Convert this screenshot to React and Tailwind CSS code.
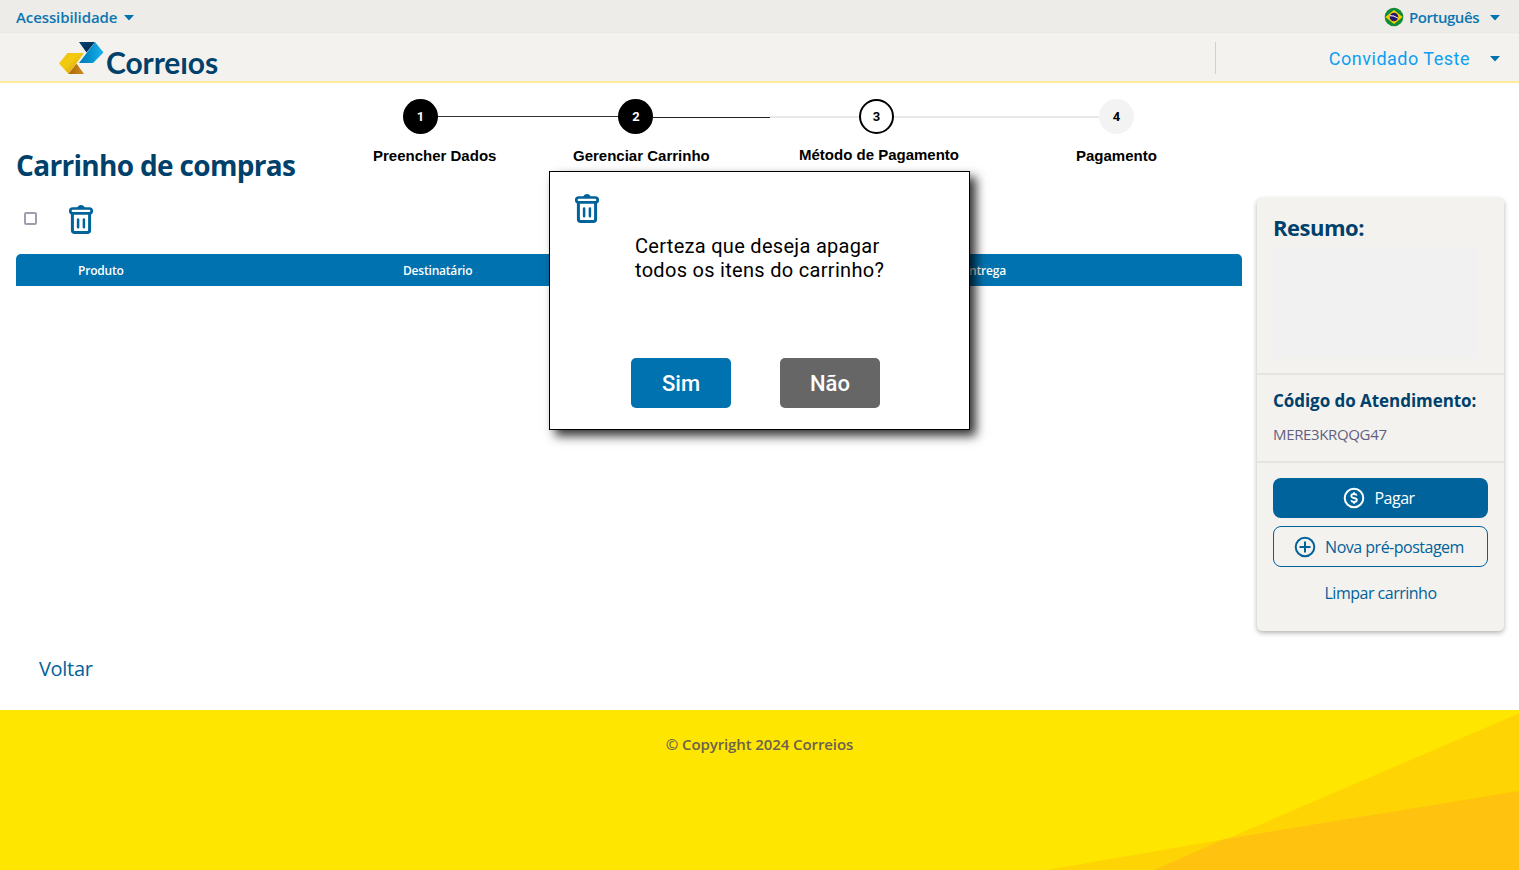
const brand = "font-['Trebuchet_MS','Open_Sans',sans-serif]";

function Caret() {
  return (
    <svg width="10" height="6" viewBox="0 0 10 6" className="mt-px shrink-0 fill-[#0072b0]">
      <path d="M0 0h10L5 5.5z" />
    </svg>
  );
}

function Trash() {
  return (
    <svg width="26" height="31" viewBox="0 0 26 31" fill="none" stroke="#00639b" className="shrink-0">
      <path d="M9.200 4C10 0 16 0 16.800 4z" fill="#00639b" stroke="none" />
      <rect x="2.300" y="4.500" width="21.400" height="4.800" rx="2.400" strokeWidth="2.700" />
      <path d="M4.400 9.500v16.800a2.300 2.300 0 0 0 2.300 2.300h12.600a2.300 2.300 0 0 0 2.300-2.300V9.500" strokeWidth="3" />
      <path d="M10.100 15.500v7.800M15.900 15.500v7.800" strokeWidth="2.500" strokeLinecap="round" />
    </svg>
  );
}

function Flag() {
  return (
    <svg width="20" height="20" viewBox="0 0 20 20">
      <circle cx="10" cy="10" r="9.300" fill="#118c36" />
      <path d="M10 3l8.600 7L10 17 1.400 10z" fill="#f8cf05" />
      <circle cx="10" cy="10" r="4.300" fill="#29166f" />
      <path d="M6 8.700q4-.5 8 2.500" fill="none" stroke="#fff" strokeWidth="1" />
    </svg>
  );
}

function Logo() {
  return (
    <div className="flex items-start" aria-label="Correios">
      <svg width="45" height="33" viewBox="0 0 45 33" className="shrink-0">
        <defs>
          <linearGradient id="navy" x1="0" y1="0" x2="1" y2="1">
            <stop offset="0" stopColor="#00467a" />
            <stop offset="1" stopColor="#00203f" />
          </linearGradient>
          <linearGradient id="blue" x1="0" y1="0" x2="1" y2="0">
            <stop offset="0" stopColor="#007cb8" />
            <stop offset=".3" stopColor="#0088c6" />
            <stop offset="1" stopColor="#1ab4ec" />
          </linearGradient>
          <linearGradient id="gold" x1="0" y1="0" x2="1" y2="1">
            <stop offset="0" stopColor="#e9be10" />
            <stop offset=".4" stopColor="#f3cc10" />
            <stop offset="1" stopColor="#d39a10" />
          </linearGradient>
          <linearGradient id="amber" x1="0" y1="0" x2="1" y2="0">
            <stop offset="0" stopColor="#a8650d" />
            <stop offset="1" stopColor="#cf8d18" />
          </linearGradient>
        </defs>
        <path d="M20 0h16l-8.500 10.500z" fill="url(#navy)" />
        <path d="M36 0l8.500 10.500L34 21H20z" fill="url(#blue)" />
        <path d="M8.500 11H25L9.500 32 0 21.500z" fill="url(#gold)" />
        <path d="M17.500 21.500L25 32H9.500z" fill="url(#amber)" />
      </svg>
      <span className="ml-[2px] mt-[5px] font-['Lato',sans-serif] text-[30px] font-bold leading-[30px] tracking-[-0.100px] text-[#00416b]">
        Corre&#305;os
      </span>
    </div>
  );
}

function Step({ n, kind }) {
  const look = {
    done: "bg-black text-white",
    current: "border-2 border-black bg-white text-black",
    next: "bg-[#f3f3f3] text-black",
  }[kind];
  return (
    <div className={"flex size-[35px] shrink-0 items-center justify-center rounded-full pl-px font-['Roboto',sans-serif] text-[13px] font-bold " + look}>
      {n}
    </div>
  );
}

function Stepper() {
  return (
    <div className="pt-4">
      <div className="flex items-center pl-[29.500px]">
        <Step n="1" kind="done" />
        <div className="h-px w-[180.500px] bg-[#333]" />
        <Step n="2" kind="done" />
        <div className="mt-px h-px w-[117px] bg-[#222]" />
        <div className="h-[2px] w-[88.500px] bg-[#e8e8e8]" />
        <Step n="3" kind="current" />
        <div className="h-[2px] w-[205px] bg-[#e8e8e8]" />
        <Step n="4" kind="next" />
      </div>
      <div className="mt-[13px] flex whitespace-nowrap font-['Liberation_Sans',Arial,sans-serif] text-[15px] font-bold leading-[18px] text-black">
        <div className="w-[200px]">Preencher Dados</div>
        <div className="w-[226px]">Gerenciar Carrinho</div>
        <div className="-mt-px w-[277px]">Método de Pagamento</div>
        <div>Pagamento</div>
      </div>
    </div>
  );
}

function Summary() {
  return (
    <aside className="h-[433px] w-[247px] shrink-0 rounded-[5px] bg-[#f4f2ee] shadow-[0_2px_5px_rgba(0,0,0,0.3)]">
      <section className="h-[177px] border-b-2 border-[#e5e4e0] px-4 pt-[14px]">
        <h2 className="text-[22px] font-bold leading-[30px] tracking-[-0.500px] text-[#00416b]">Resumo:</h2>
        <div className="mt-[5px] h-[111px] w-[204px] bg-[#f1f1f1]" />
      </section>
      <section className="h-[88px] border-b-2 border-[#e5e4e0] px-4 pt-[14px]">
        <h3 className="whitespace-nowrap text-[17px] font-bold leading-6 tracking-[-0.050px] text-[#00416b]">Código do Atendimento:</h3>
        <p className="mt-[9px] text-[15px] font-medium leading-6 tracking-[-0.350px] text-[#635f80]">MERE3KRQQG47</p>
      </section>
      <section className="flex flex-col px-4 pt-[15px] text-[16px] font-medium tracking-[-0.500px] text-[#00639b]">
        <button className="flex h-10 items-center justify-center gap-[9px] rounded-lg bg-[#00639b] pr-[3px] text-white">
          <svg width="22" height="22" viewBox="0 0 22 22" fill="none" stroke="currentColor" strokeWidth="2">
            <circle cx="11" cy="11" r="9.300" />
            <path d="M13.800 8.500c-.5-1.200-1.600-1.500-2.800-1.500-1.600 0-2.700.8-2.700 2s1.100 1.700 2.700 2 2.800.8 2.800 2-1.200 2-2.800 2c-1.400 0-2.500-.5-2.900-1.700M11 5.200V7M11 15v1.800" strokeWidth="1.800" />
          </svg>
          Pagar
        </button>
        <button className="mt-2 flex h-[41px] items-center justify-center gap-[9px] whitespace-nowrap rounded-lg border border-[#00639b] pr-[3px]">
          <svg width="22" height="22" viewBox="0 0 22 22" fill="none" stroke="currentColor" strokeWidth="2">
            <circle cx="11" cy="11" r="9.300" />
            <path d="M11 5.500v11M5.500 11h11" />
          </svg>
          Nova pré-postagem
        </button>
        <button className="mt-[14px] h-6">Limpar carrinho</button>
      </section>
    </aside>
  );
}

function Dialog() {
  return (
    <div role="dialog" className="absolute left-[549px] top-[171px] flex h-[259px] w-[421px] flex-col border border-black bg-white pl-[24px] pt-[21px] font-['Roboto',sans-serif] shadow-[6px_6px_10px_rgba(0,0,0,0.8)]">
      <Trash />
      <p className="ml-[61px] mt-[10px] whitespace-nowrap text-[20px] leading-6 tracking-[0.300px] text-black">
        Certeza que deseja apagar
        <br />
        todos os itens do carrinho?
      </p>
      <div className="ml-[57px] mt-[76px] flex gap-[49px] text-[22px] font-medium text-white">
        <button className="h-[50px] w-[100px] rounded-[5px] bg-[#0072b0]">Sim</button>
        <button className="h-[50px] w-[100px] rounded-[5px] bg-[#666]">Não</button>
      </div>
    </div>
  );
}

export default function App() {
  return (
    <div className={"relative flex h-[870px] w-[1519px] flex-col overflow-hidden bg-white " + brand}>
      <div className="flex h-[34px] shrink-0 items-center justify-between bg-[#eeece8] pl-4 pr-[19px] text-[15px] font-semibold text-[#0c76b2]">
        <div className="flex items-center gap-[7px]">
          <span className="tracking-[-0.100px]">Acessibilidade</span>
          <Caret />
        </div>
        <div className="flex items-center">
          <Flag />
          <span className="ml-[5px] mr-[11px] tracking-[-0.450px]">Português</span>
          <Caret />
        </div>
      </div>
      <header className="flex h-[49px] shrink-0 justify-between border-b-2 border-t border-b-[#ffeb99] border-t-[#f8f7f5] bg-[#f4f2ee] pl-[59px] pr-[19px] pt-[7px]">
        <Logo />
        <div className="flex h-8 w-[285px] items-center justify-end gap-[20px] border-l border-[#d0d0cc] font-['Roboto',sans-serif] text-[18px] tracking-[0.500px] text-[#0c9ff2]">
          <span>Convidado Teste</span>
          <Caret />
        </div>
      </header>

      <div className="flex h-[115px] shrink-0 items-start">
        <h1 className="ml-4 w-[357px] shrink-0 whitespace-nowrap pt-[62px] text-[28px] font-bold leading-10 tracking-[-0.680px] text-[#00416b]">
          Carrinho de compras
        </h1>
        <Stepper />
      </div>

      <main className="flex h-[512px] shrink-0 gap-[15px] px-4">
        <div className="flex w-[1226px] shrink-0 flex-col">
          <div className="flex h-14 items-start pl-[8px] pt-[6px]">
            <span className="mr-[31px] mt-[8px] size-[13px] rounded-[2px] border-2 border-[#a19db0] bg-white" />
            <Trash />
          </div>
          <div className="flex h-8 items-center rounded-t-[5px] bg-[#0072b0] pl-[62px] pt-[2px] text-xs font-semibold tracking-[-0.200px] text-white">
            <span className="w-[325px]">Produto</span>
            <span className="w-[270px]">Destinatário</span>
            <span className="w-[333px] text-right">Entrega</span>
          </div>
          <a className="ml-[23px] mt-[368px] text-[20px] leading-[30px] tracking-[-0.300px] text-[#00639b]">Voltar</a>
        </div>
        <Summary />
      </main>

      <footer className="relative h-[160px] shrink-0 bg-[#ffe600]">
        <svg className="absolute bottom-0 right-0" width="489" height="160" viewBox="0 0 489 160">
          <path d="M489 3.500L124 160h365z" fill="#ffd404" />
          <path d="M17 160L193 129.500 124 160z" fill="#ffd404" />
          <path d="M193 129.500L489 81v79H124z" fill="#ffc20e" />
        </svg>
        <p className="relative pt-[22px] text-center text-[15px] font-semibold leading-6 tracking-[-0.100px] text-[#6b6250]">
          © Copyright 2024 Correios
        </p>
      </footer>
      <Dialog />
    </div>
  );
}
